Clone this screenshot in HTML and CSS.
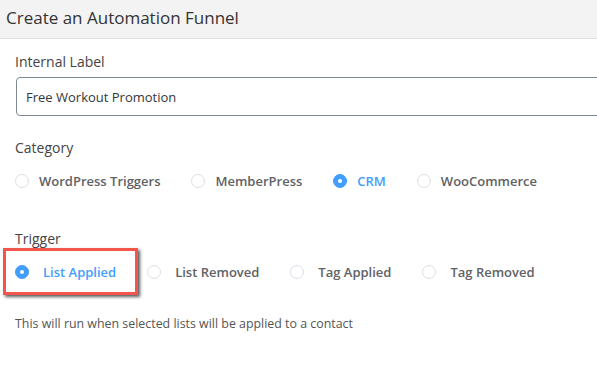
FILE: index.html
```html
<!DOCTYPE html>
<html>
<head>
<meta charset="utf-8">
<link rel="stylesheet" href="styles.css">
</head>
<body>
<div class="dialog">
  <div class="dialog-header">Create an Automation Funnel</div>
  <div class="dialog-body">
    <div class="field">
      <label class="field-label">Internal Label</label>
      <div class="text-input">Free Workout Promotion</div>
    </div>
    <div class="field field-category">
      <label class="field-label">Category</label>
      <div class="radio-group">
        <span class="radio"><span class="radio-dot"></span><span class="radio-text">WordPress Triggers</span></span>
        <span class="radio"><span class="radio-dot"></span><span class="radio-text">MemberPress</span></span>
        <span class="radio is-checked"><span class="radio-dot"></span><span class="radio-text">CRM</span></span>
        <span class="radio"><span class="radio-dot"></span><span class="radio-text">WooCommerce</span></span>
      </div>
    </div>
    <div class="field field-trigger">
      <label class="field-label">Trigger</label>
      <div class="radio-group trigger-group">
        <span class="radio is-checked highlighted"><span class="radio-dot"></span><span class="radio-text">List Applied</span><span class="annotation"></span></span>
        <span class="radio"><span class="radio-dot"></span><span class="radio-text">List Removed</span></span>
        <span class="radio"><span class="radio-dot"></span><span class="radio-text">Tag Applied</span></span>
        <span class="radio"><span class="radio-dot"></span><span class="radio-text">Tag Removed</span></span>
      </div>
    </div>
    <p class="help-text">This will run when selected lists will be applied to a contact</p>
  </div>
</div>
</body>
</html>
```

FILE: styles.css
```css
html, body {
  margin: 0;
  padding: 0;
  background: #fff;
  overflow: hidden;
}
body {
  font-family: "Open Sans", "Noto Sans", sans-serif;
  width: 597px;
  height: 386px;
}
.dialog {
  width: 597px;
  height: 386px;
  overflow: hidden;
}
.dialog-header {
  box-sizing: border-box;
  height: 39px;
  background: #f3f3f3;
  border-bottom: 1px solid #e0e0e0;
  padding: 6px 0 0 6px;
  font-size: 17px;
  line-height: 24px;
  color: #333;
}
.dialog-body {
  padding: 0 0 0 15px;
  display: flex;
  flex-direction: column;
}
.field {
  display: flex;
  flex-direction: column;
}
.field-label {
  font-size: 14px;
  line-height: 20px;
  color: #444;
  margin-top: 13px;
  margin-bottom: 5px;
}
.text-input {
  width: 590px;
  height: 39px;
  box-sizing: border-box;
  border: 1px solid #7e8993;
  border-radius: 4px;
  margin-left: 1px;
  padding: 2px 9px 0;
  font-size: 13px;
  line-height: 35px;
  color: #32373c;
}
.field-category .field-label {
  margin-top: 22px;
  margin-bottom: 13px;
}
.field-trigger .field-label {
  margin-top: 38px;
  margin-bottom: 13px;
}
.radio-group {
  display: flex;
  align-items: center;
  height: 20px;
}
.radio {
  display: inline-flex;
  align-items: center;
  margin-right: 31px;
  position: relative;
  font-size: 13px;
  font-weight: 600;
  color: #606266;
  white-space: nowrap;
}
.radio-dot {
  width: 14px;
  height: 14px;
  box-sizing: border-box;
  border: 1px solid #dcdfe6;
  border-radius: 50%;
  background: #fff;
  position: relative;
  flex: none;
}
.radio-text {
  padding-left: 10px;
  line-height: 20px;
}
.trigger-group .radio-text {
  padding-left: 14px;
}
.radio.is-checked {
  color: #409eff;
}
.radio.is-checked .radio-dot {
  background: #409eff;
  border-color: #409eff;
}
.radio.is-checked .radio-dot::after {
  content: "";
  position: absolute;
  width: 4px;
  height: 4px;
  border-radius: 50%;
  background: #fff;
  left: 4px;
  top: 4px;
}
.annotation {
  position: absolute;
  left: -12px;
  top: -14px;
  width: 135px;
  height: 47px;
  box-sizing: border-box;
  border: 3px solid #f2554b;
  box-shadow: 2px 2px 3px rgba(0, 0, 0, 0.65);
  pointer-events: none;
}
.help-text {
  margin: 34px 0 0 0;
  font-size: 12.4px;
  line-height: 16px;
  color: #555;
}
```
